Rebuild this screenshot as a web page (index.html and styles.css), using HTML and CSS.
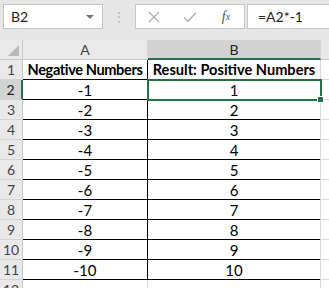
FILE: index.html
```html
<!DOCTYPE html>
<html lang="en">
<head>
    <meta charset="UTF-8">
    <title>Negative to positive</title>
    <link rel="stylesheet" href="styles.css">
</head>
<body>
    <div class="formula-bar">
        <div class="name-box">
            <span>B2</span>
            <span class="caret"></span>
        </div>
        <div class="grip">⋮</div>
        <div class="buttons">
            <span class="btn">
                <svg width="12" height="12" viewBox="0 0 12 12"><path d="M1 1 L11 11 M11 1 L1 11" stroke="#b0b0b0" stroke-width="1.3"/></svg>
            </span>
            <span class="btn">
                <svg width="14" height="12" viewBox="0 0 14 12"><path d="M1 6.5 L5 10.5 L13 1.5" stroke="#b0b0b0" stroke-width="1.3" fill="none"/></svg>
            </span>
            <span class="btn fx"><i>f</i><sub>x</sub></span>
        </div>
        <div class="formula">=A2*-1</div>
    </div>

    <div class="sheet">
        <div class="corner"><span class="tri"></span></div>
        <div class="col-head">A</div>
        <div class="col-head active">B</div>
        <div class="col-head rest"></div>

        <div class="row-head">1</div>
        <div class="cell bold narrow">Negative Numbers</div>
        <div class="cell bold last">Result: Positive Numbers</div>
        <div class="cell empty"></div>

        <div class="row-head active">2</div>
        <div class="cell">-1</div>
        <div class="cell last selected">1<span class="handle"></span></div>
        <div class="cell empty"></div>

        <div class="row-head">3</div><div class="cell">-2</div><div class="cell last">2</div><div class="cell empty"></div>
        <div class="row-head">4</div><div class="cell">-3</div><div class="cell last">3</div><div class="cell empty"></div>
        <div class="row-head">5</div><div class="cell">-4</div><div class="cell last">4</div><div class="cell empty"></div>
        <div class="row-head">6</div><div class="cell">-5</div><div class="cell last">5</div><div class="cell empty"></div>
        <div class="row-head">7</div><div class="cell">-6</div><div class="cell last">6</div><div class="cell empty"></div>
        <div class="row-head">8</div><div class="cell">-7</div><div class="cell last">7</div><div class="cell empty"></div>
        <div class="row-head">9</div><div class="cell">-8</div><div class="cell last">8</div><div class="cell empty"></div>
        <div class="row-head">10</div><div class="cell">-9</div><div class="cell last">9</div><div class="cell empty"></div>
        <div class="row-head">11</div><div class="cell">-10</div><div class="cell last">10</div><div class="cell empty"></div>
        <div class="row-head">12</div><div class="cell plain"></div><div class="cell plain"></div><div class="cell empty"></div>
    </div>
</body>
</html>
```

FILE: styles.css
```css
body, html {
    margin: 0;
    padding: 0;
    width: 329px;
    height: 288px;
    overflow: hidden;
    background: #fff;
    font-family: Lato, 'Open Sans', sans-serif;
}
.formula-bar {
    display: flex;
    align-items: stretch;
    height: 25px;
    padding: 4px 0 11px 3px;
    background: #e6e6e6;
}
.name-box {
    width: 100px;
    background: #fff;
    border: 1px solid #c6c6c6;
    display: flex;
    align-items: center;
    justify-content: space-between;
    padding: 0 8px 0 7px;
    box-sizing: border-box;
    font-size: 14px;
    color: #222;
}
.caret {
    width: 0;
    height: 0;
    border-left: 4px solid transparent;
    border-right: 4px solid transparent;
    border-top: 4px solid #777;
}
.grip {
    width: 32px;
    color: #b5b5b5;
    text-align: center;
    font-size: 14px;
    line-height: 25px;
}
.buttons {
    width: 110px;
    background: #fff;
    border: 1px solid #c6c6c6;
    box-sizing: border-box;
    display: flex;
    align-items: center;
}
.btn {
    width: 36px;
    display: flex;
    justify-content: center;
    align-items: center;
}
.fx {
    font-family: 'Liberation Serif', serif;
    color: #555;
    font-size: 14px;
}
.fx sub {
    font-size: 10px;
    font-style: italic;
}
.formula {
    flex: 1;
    margin-left: 2px;
    background: #fff;
    border: 1px solid #c6c6c6;
    border-right: none;
    font-size: 14px;
    line-height: 23px;
    padding-left: 10px;
    color: #222;
}
.sheet {
    display: grid;
    grid-template-columns: 23px 125px 173px 1fr;
    grid-template-rows: 20px repeat(12, 20px);
    font-size: 15px;
}
.corner, .col-head, .row-head {
    background: #e9e9e9;
    color: #444;
    display: flex;
    align-items: center;
    justify-content: center;
    box-sizing: border-box;
}
.corner {
    border-right: 1px solid #c8c8c8;
    border-bottom: 1px solid #c8c8c8;
    position: relative;
}
.tri {
    position: absolute;
    right: 3px;
    bottom: 3px;
    width: 0;
    height: 0;
    border-left: 11px solid transparent;
    border-bottom: 11px solid #b9b9b9;
}
.col-head {
    border-right: 1px solid #d4d4d4;
    border-bottom: 1px solid #c8c8c8;
    font-size: 14px;
}
.col-head.active {
    background: #d3d3d3;
    border-bottom: 2px solid #217346;
    color: #222;
}
.col-head.rest {
    border-right: none;
}
.row-head {
    border-right: 1px solid #c8c8c8;
    border-bottom: 1px solid #d4d4d4;
    font-size: 14px;
}
.row-head.active {
    background: #d3d3d3;
    border-right: 2px solid #217346;
    color: #222;
}
.cell {
    display: flex;
    align-items: center;
    justify-content: center;
    border-right: 1px solid #000;
    border-bottom: 1px solid #000;
    box-sizing: border-box;
    color: #000;
    white-space: nowrap;
}
.cell.bold {
    font-weight: bold;
    font-size: 14.6px;
}
.cell.narrow {
    letter-spacing: -0.4px;
}
.cell.empty {
    border-right: none;
    border-bottom: 1px solid #dadada;
    border-left: 1px solid #dadada;
    margin-left: -1px;
}
.cell.plain {
    border-right: 1px solid #dadada;
    border-bottom: 1px solid #dadada;
}
.cell.selected {
    position: relative;
    outline: 2px solid #217346;
    outline-offset: -1px;
}
.handle {
    position: absolute;
    right: -4px;
    bottom: -4px;
    width: 5px;
    height: 5px;
    background: #217346;
    border: 1px solid #fff;
}
```
